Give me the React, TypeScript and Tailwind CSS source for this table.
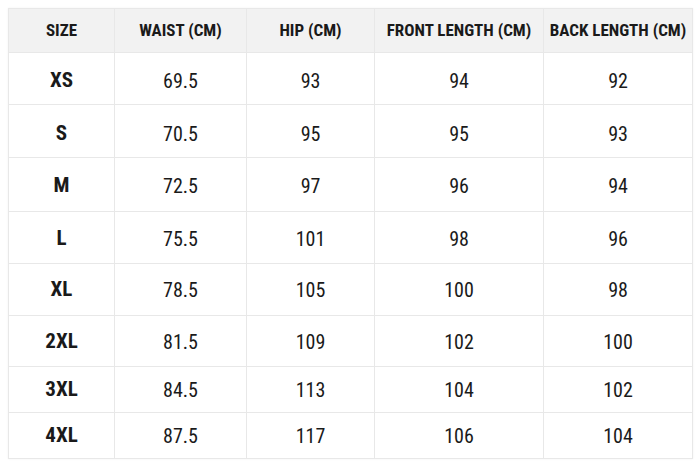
import React from "react";

const headers = ["SIZE", "WAIST (CM)", "HIP (CM)", "FRONT LENGTH (CM)", "BACK LENGTH (CM)"];
const rows: [string, string, string, string, string][] = [
  ["XS", "69.5", "93", "94", "92"],
  ["S", "70.5", "95", "95", "93"],
  ["M", "72.5", "97", "96", "94"],
  ["L", "75.5", "101", "98", "96"],
  ["XL", "78.5", "105", "100", "98"],
  ["2XL", "81.5", "109", "102", "100"],
  ["3XL", "84.5", "113", "104", "102"],
  ["4XL", "87.5", "117", "106", "104"],
];

const rowPad = ["pt-[4px]", "pt-[5px]", "pt-[3px]", "pt-[3px]", "pt-[1px]", "pt-[1px]", "pt-[1px]", "pt-[1px]"];

export default function App() {
  return (
    <div className="w-[700px] h-[467px] bg-white pt-[8px] pl-[8px]" style={{ fontFamily: "Roboto, 'Liberation Sans', sans-serif" }}>
      <div className="inline-grid grid-cols-[105px_131px_127px_168px_148px] grid-rows-[43px_51px_52px_53px_51px_51px_50px_45px_45px] gap-px bg-[#e8e8e8] p-px shadow-[0_0_2px_rgba(0,0,0,0.06)] font-stretch-condensed">
        {headers.map((h) => (
          <div key={h} className="bg-[#f2f2f2] flex items-center justify-center pt-px text-[17px] font-bold text-[#1a1a1a]">
            {h}
          </div>
        ))}
        {rows.map((r, ri) =>
          r.map((c, i) => (
            <div
              key={r[0] + i}
              className={
                "bg-white flex items-center justify-center text-[#1a1a1a] " +
                rowPad[ri] +
                " " +
                (i === 0 ? "font-bold text-[21px]" : "font-normal text-[20px]")
              }
            >
              {c}
            </div>
          ))
        )}
      </div>
    </div>
  );
}
